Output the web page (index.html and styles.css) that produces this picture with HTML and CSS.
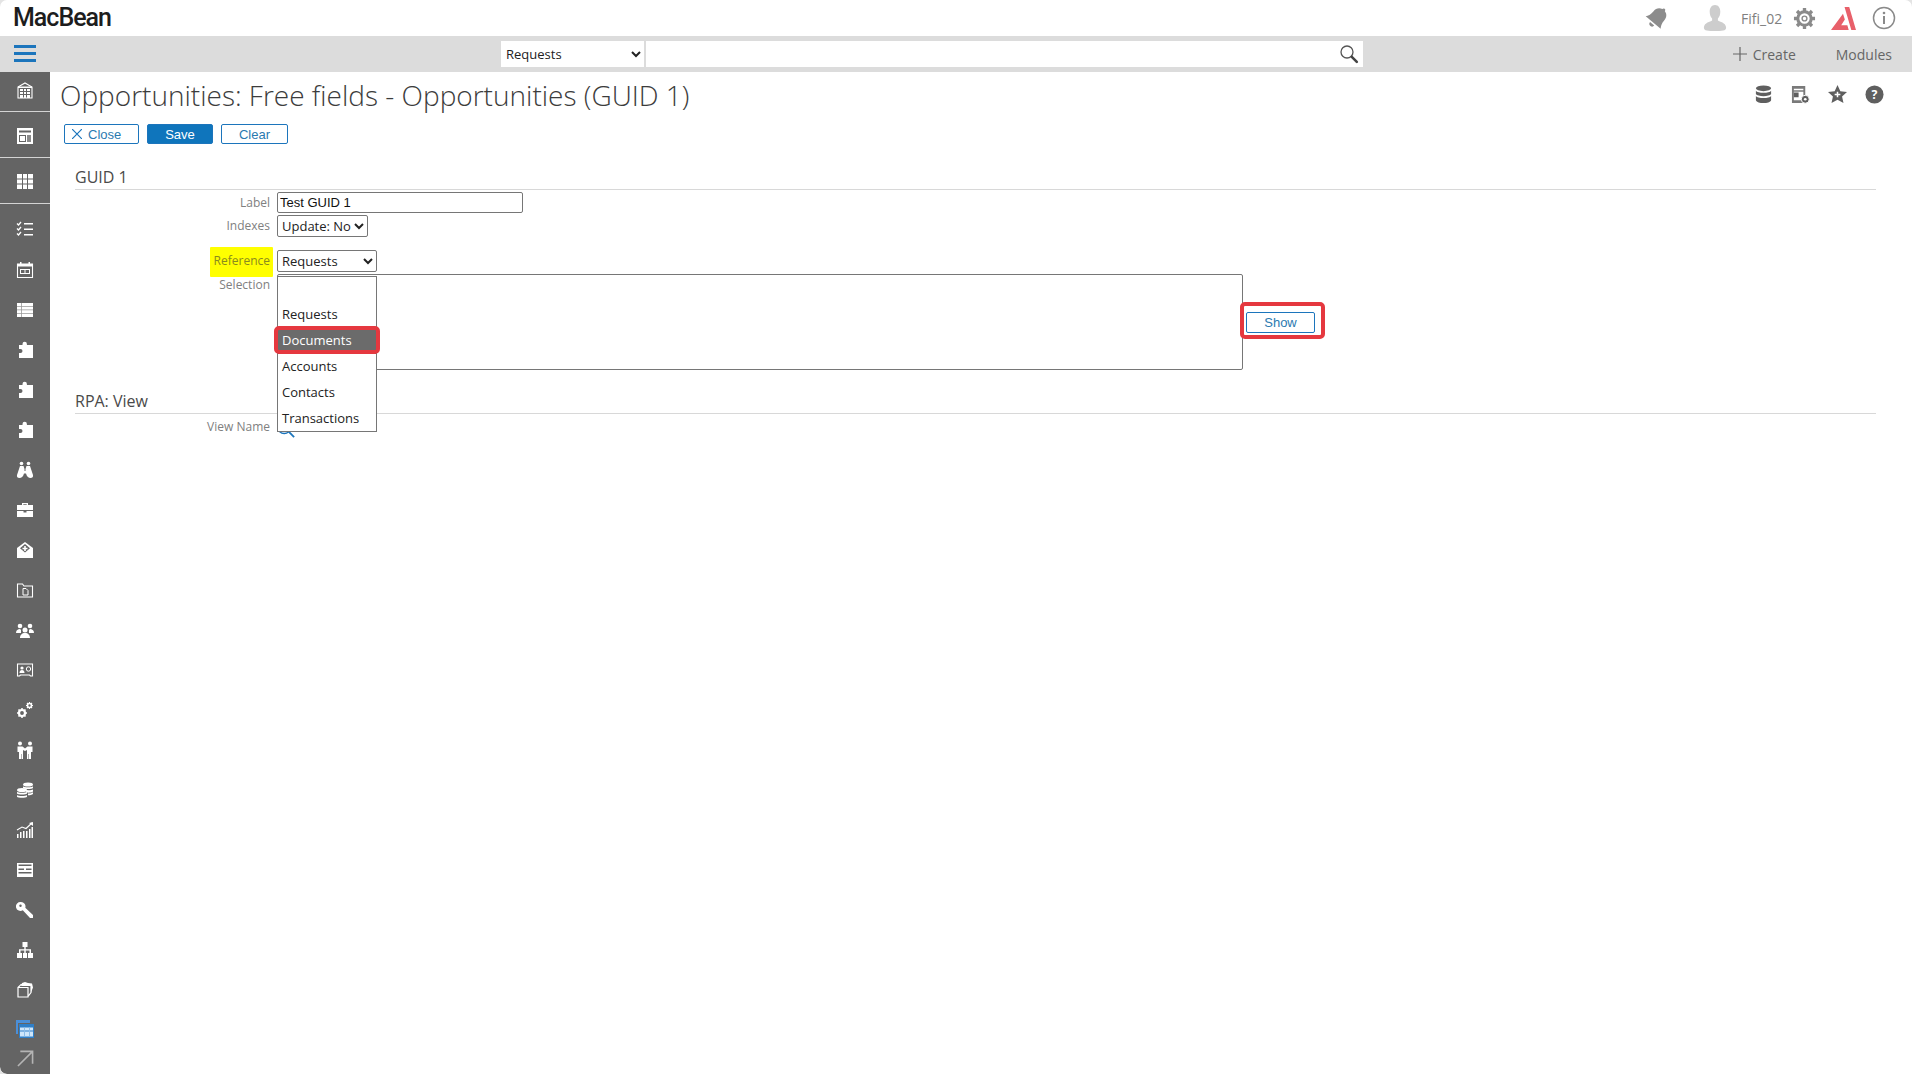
FILE: index.html
```html
<!DOCTYPE html>
<html lang="en">
<head>
<meta charset="utf-8">
<title>Opportunities: Free fields</title>
<link rel="stylesheet" href="styles.css">
</head>
<body>
<div class="app">
  <header class="topbar">
    <div class="logo">MacBean</div>
    <div class="top-icons">
      <svg class="i-bell" viewBox="0 0 24 24"><g transform="rotate(40 12 12)" fill="#8c8c8c"><path d="M10.500 2.500a1.500 1.500 0 0 1 3 0c3.500.8 5 3.500 5 7 0 4 1 6 2.500 8H3c1.500-2 2.500-4 2.500-8 0-3.500 1.500-6.200 5-7z"/><path d="M9.500 19h5a2.500 2.500 0 0 1-5 0z"/></g></svg>
      <svg class="i-user" viewBox="0 0 24 28"><path fill="#cdcdcd" d="M12 0c3.500 0 5.500 3 5.500 7 0 3-1 5.500-2.500 7v2c2 1.500 8 2 8.500 7 .2 2-1 3-3 3.500-2 .5-6 .5-8.500.5s-6.500 0-8.500-.5c-2-.5-3.200-1.500-3-3.500C1 18 7 17.500 9 16v-2c-1.500-1.500-2.500-4-2.500-7 0-4 2-7 5.500-7z"/></svg>
      <span class="username">Fifi_02</span>
      <svg class="i-gear" viewBox="0 0 24 24"><circle cx="12" cy="12" r="7" fill="none" stroke="#8a8a8a" stroke-width="3.200"/><circle cx="12" cy="12" r="2.500" fill="none" stroke="#8a8a8a" stroke-width="1.500"/><path stroke="#8a8a8a" stroke-width="3.500" d="M12 1v4M12 19v4M1 12h4M19 12h4M4.200 4.200l2.800 2.800M17 17l2.800 2.800M4.200 19.800L7 17M17 7l2.800-2.800"/></svg>
      <svg class="i-brand" viewBox="0 0 24 24"><path fill="#e8606a" d="M13 1h4.500L24 23h-4.500zM11.500 7.500l1.800 5.500-3.500 5.500h5.900l1.300 4.500H0z"/></svg>
      <svg class="i-info" viewBox="0 0 24 24"><circle cx="12" cy="12" r="10.500" fill="none" stroke="#8a8a8a" stroke-width="1.500"/><path fill="#8a8a8a" d="M11 10h2v8h-2z"/><circle cx="12" cy="7" r="1.300" fill="#8a8a8a"/></svg>
    </div>
  </header>

  <nav class="navbar">
    <svg class="hamburger" viewBox="0 0 22 17"><path fill="#1c75bc" d="M0 0h22v3H0zM0 7h22v3H0zM0 14h22v3H0z"/></svg>
    <div class="searchbox">
      <select class="search-scope"><option>Requests</option></select>
      <div class="search-input">
        <svg class="i-search" viewBox="0 0 20 20"><circle cx="8" cy="8" r="6" fill="none" stroke="#555" stroke-width="1.300"/><path stroke="#444" stroke-width="2.600" stroke-linecap="round" d="M12.800 12.800l5 5"/></svg>
      </div>
    </div>
    <div class="nav-actions">
      <span class="nav-create"><svg class="i-plus" viewBox="0 0 14 14"><path stroke="#666" stroke-width="1.200" d="M7 0v14M0 7h14"/></svg>Create</span>
      <span class="nav-modules">Modules</span>
    </div>
  </nav>

  <div class="main">
    <aside class="sidebar">
      <div class="side-item first sep"><svg viewBox="0 0 18 18"><path fill="none" stroke="#fff" stroke-width="1.100" d="M2 6l7-4 7 4v11H2z"/><path fill="#fff" d="M2 5.500h14V7H2z"/><path fill="#fff" d="M4 8h3v2H4zM8 8h2v2H8zM11 8h3v2h-3zM4 11h3v2H4zM8 11h2v2H8zM11 11h3v2h-3zM4 14h3v3H4zM8 14h2v3H8zM11 14h3v3h-3z"/></svg></div>
      <div class="side-item second sep"><svg viewBox="0 0 18 18"><path fill="#fff" d="M1 1h16v16H1z"/><path fill="#646464" d="M3 3.500h12v2H3zM3 8h7v7H3z"/><path fill="#8a8a8a" d="M11 8h4v7h-4z"/><path fill="#fff" d="M4 9h5v5H4z"/></svg></div>
      <div class="side-item third sep"><svg viewBox="0 0 18 18"><path fill="#fff" d="M1 2h16v15H1z"/><path fill="#646464" d="M1 6.500h16v1H1zM1 11.500h16v1H1zM6 2h1v15H6zM11 2h1v15h-1z"/></svg></div>
      <div class="side-item fourth"><svg viewBox="0 0 18 18"><path fill="none" stroke="#fff" stroke-width="1.300" d="M1 3.500l1.500 1.500L5 2M1 8.500L2.500 10 5 7M1 13.500L2.500 15 5 12"/><path fill="#fff" d="M8 3h9v1.500H8zM8 8.500h9V10H8zM8 14h9v1.500H8z"/></svg></div>
      <div class="side-item fifth"><svg viewBox="0 0 18 18"><path fill="none" stroke="#fff" stroke-width="1.100" d="M1.500 3h15v13.500h-15z"/><path fill="#fff" d="M1.500 3h15v2.500h-15zM4 1h1.500v3H4zM12.500 1H14v3h-1.500zM4 8h10v5H4z"/><path fill="#646464" d="M5 9h3.500v3H5zM9.500 9H13v3H9.500z"/></svg></div>
      <div class="side-item sixth"><svg viewBox="0 0 18 18"><path fill="#fff" d="M1 2h16v14H1z"/><path fill="#9a9a9a" d="M5 2h.8v14H5zM1 5h16v.8H1zM1 8.500h16v.8H1zM1 12h16v.8H1z"/></svg></div>
      <div class="side-item"><svg viewBox="0 0 18 18"><use href="#puzzle"/></svg></div>
      <div class="side-item"><svg viewBox="0 0 18 18"><use href="#puzzle"/></svg></div>
      <div class="side-item"><svg viewBox="0 0 18 18"><use href="#puzzle"/></svg></div>
      <div class="side-item"><svg viewBox="0 0 18 18"><g fill="#fff"><circle cx="5.500" cy="2.500" r="1.800"/><circle cx="12.500" cy="2.500" r="1.800"/><path d="M4 5h3.500l1 3v2h1V8l1-3H14l3 9c.4 2-.6 3-2.500 3S11 16 10 12.500H8C7 16 5.500 17 3.500 17S.6 16 1 14z"/></g></svg></div>
      <div class="side-item"><svg viewBox="0 0 18 18"><path fill="#fff" d="M6 2h6v2h5v5H1V4h5zM7.300 3.200V4h3.400v-.8zM1 10h6.500v1.500h3V10H17v6H1z"/></svg></div>
      <div class="side-item"><svg viewBox="0 0 18 18"><path fill="#fff" d="M9 1l8 6v10H1V7z"/><path fill="#646464" d="M9 3l5 4.200L9 11.500 4 7.200z"/><path fill="#fff" d="M8.200 5h1.600v1.700h1.700v1.500H9.800V10H8.200V8.200H6.500V6.700h1.700z"/></svg></div>
      <div class="side-item"><svg viewBox="0 0 18 18"><path fill="none" stroke="#fff" stroke-width="1.100" d="M1.500 3h5l1.500 2h8.500v11h-15z"/><path fill="none" stroke="#fff" stroke-width="1" d="M7 7.500h3l2 2v4.500H7z"/></svg></div>
      <div class="side-item"><svg viewBox="0 0 18 18"><g fill="#fff"><circle cx="4" cy="5" r="2.300"/><circle cx="14" cy="5" r="2.300"/><circle cx="9" cy="9" r="2.500"/><path d="M0 12c0-3 2-4 4-4l1 1v3zM18 12c0-3-2-4-4-4l-1 1v3zM4 17c0-3 2-5 5-5s5 2 5 5z"/></g></svg></div>
      <div class="side-item"><svg viewBox="0 0 18 18"><path fill="none" stroke="#fff" stroke-width="1.100" d="M1.500 3h15v12h-2l-1-1h-9l-1 1h-2z"/><g fill="#fff"><circle cx="6" cy="7" r="1.600"/><path d="M3.500 12c0-2 1-3 2.500-3s2.500 1 2.500 3z"/></g><circle cx="12.500" cy="8" r="2.200" fill="none" stroke="#fff"/></svg></div>
      <div class="side-item"><svg viewBox="0 0 18 18"><circle cx="6" cy="12" r="3" fill="none" stroke="#fff" stroke-width="2.200"/><path stroke="#fff" stroke-width="1.600" d="M6 7v2M6 15v2M1 12h2M9 12h2M2.500 8.500l1.500 1.500M8 14l1.500 1.500M2.500 15.500L4 14M8 10l1.500-1.500"/><circle cx="13.500" cy="4.500" r="2" fill="none" stroke="#fff" stroke-width="1.600"/><path stroke="#fff" stroke-width="1.200" d="M13.500 1v1M13.500 7v1M10 4.500h1M16 4.500h1M11 2l1 1M15 6l1 1M11 7l1-1M15 3l1-1"/></svg></div>
      <div class="side-item"><svg viewBox="0 0 18 18"><g fill="#fff"><circle cx="4" cy="2.500" r="2"/><circle cx="14" cy="2.500" r="2"/><path d="M1.500 5.500h5L9 7.500l2.500-2h5V11H15v7h-2v-5h-.5v5H11V9L9 10 7 9v9H5.500v-5H5v5H3v-7H1.500z"/></g></svg></div>
      <div class="side-item"><svg viewBox="0 0 18 18"><g fill="#fff"><ellipse cx="12" cy="3.500" rx="5" ry="2"/><path d="M7 5.300c1 1.400 9 1.400 10 0V7c-1 1.400-9 1.400-10 0zM8 8.500c3 1 7 1 9 0v2c-1 1-4 1.400-6 1.100zM12 12.500c2 0 4-.3 5-1.200V13c-1 1-3 1.300-5 1.300z"/><ellipse cx="6" cy="9" rx="5" ry="2"/><path d="M1 10.800c1 1.400 9 1.400 10 0v1.700c-1 1.400-9 1.400-10 0zM1 14c1 1.400 9 1.400 10 0v1.700c-1 1.400-9 1.400-10 0z"/></g></svg></div>
      <div class="side-item"><svg viewBox="0 0 18 18"><path fill="none" stroke="#fff" stroke-width="1.100" d="M1 9l5-3 4 1.500L16 2"/><path fill="#fff" d="M17 1v4l-4-3zM1 13h1.500v4H1zM4 11h1.500v6H4zM7 10h1.500v7H7zM10 10h1.500v7H10zM13 8h1.500v9H13zM15.500 6H17v11h-1.500z"/></svg></div>
      <div class="side-item"><svg viewBox="0 0 18 18"><path fill="#fff" d="M1 2h16v14H1z"/><path fill="#646464" d="M2.500 3.500h13V5h-13zM2.500 7.500H8V9H2.500zM10 7.500h5.500V9H10zM2.500 11h13v1.500h-13z"/></svg></div>
      <div class="side-item"><svg viewBox="0 0 18 18"><path fill="#fff" d="M5 1a4.500 4.500 0 0 1 4.300 5.800L17 14v3h-3L6.800 9.300A4.500 4.500 0 1 1 5 1z"/><circle cx="4.500" cy="4.800" r="1.200" fill="#646464"/></svg></div>
      <div class="side-item"><svg viewBox="0 0 18 18"><path fill="#fff" d="M6.500 1h5v5h-1.800v2.200H15V12h2v5h-5v-5h1.500V9.500h-3.800V12H11v5H7v-5h1.300V9.500H4.500V12H6v5H1v-5h2V8.200h5.300V6H6.500z"/></svg></div>
      <div class="side-item"><svg viewBox="0 0 18 18"><path fill="none" stroke="#fff" stroke-width="1.200" d="M2 6.500h10v9.500H2zM2 6.500l3-3h10v8l-3 4"/><path fill="#fff" d="M6 2l3-1 3 1 4 .5 1 4-2 5V5H5z"/></svg></div>
      <div class="side-item blue"><svg viewBox="0 0 18 18"><path fill="#4a8fd8" d="M0 0h14v3H0zM0 3h2v11H0z"/><path fill="#2f7fc8" d="M3 4h15v14H3z"/><path fill="#cfe6fa" d="M4 7.500h13v3H4zM4 11.500h13v5H4z"/><path fill="#8dbde8" d="M8 7.500h1v9H8zM13 7.500h1v9h-1z"/></svg></div>
      <div class="side-item last"><svg class="arrow" viewBox="0 0 18 18"><path fill="none" stroke="#b4b4b4" stroke-width="1.700" d="M1 17L16.500 1.500M3.500 1.500h13v13"/></svg></div>
    </aside>

    <main class="content">
      <div class="title-row">
        <h1 class="page-title">Opportunities: Free fields - Opportunities (GUID 1)</h1>
        <div class="page-icons">
          <svg viewBox="0 0 18 20"><g fill="#5f5f5f"><ellipse cx="9" cy="3.500" rx="8" ry="3"/><path d="M1 6c1.500 3 14.500 3 16 0v3.500c-1.500 3-14.500 3-16 0zM1 11.500c1.500 3 14.500 3 16 0V16c-1.500 4-14.500 4-16 0z"/></g></svg>
          <svg viewBox="0 0 20 20"><path fill="#7a7a7a" d="M1 1h14v18H1z"/><path fill="#fff" d="M3 4h10v1.500H3zM3 7h10v9H3z"/><path fill="#5f5f5f" d="M3 8h5v5H3z"/><circle cx="15" cy="15" r="4.200" fill="#5f5f5f" stroke="#fff"/><circle cx="15" cy="15" r="1.400" fill="#fff"/></svg>
          <svg viewBox="0 0 20 20"><path fill="#5f5f5f" d="M10 0l3 6.500 7 .8-5.200 4.700 1.500 7L10 15.500 3.700 19l1.500-7L0 7.300l7-.8z"/><path fill="#fff" d="M9.200 7h1.600v2.200H13v1.600h-2.200V13H9.200v-2.200H7V9.200h2.200z"/></svg>
          <svg viewBox="0 0 20 20"><circle cx="10" cy="10" r="9.500" fill="#5f5f5f"/><text class="help-mark" x="10" y="14.500" text-anchor="middle">?</text></svg>
        </div>
      </div>

      <div class="actions">
        <button class="btn btn-close"><svg class="i-x" viewBox="0 0 10 10"><path stroke="#1c75bc" stroke-width="1.200" d="M0 0l10 10M10 0L0 10"/></svg>Close</button>
        <button class="btn btn-save">Save</button>
        <button class="btn btn-clear">Clear</button>
      </div>

      <section class="form-area">
        <h2 class="section-head">GUID 1</h2>
        <div class="form-row row-label">
          <label class="field-label">Label</label>
          <input class="text-input" type="text" value="Test GUID 1">
        </div>
        <div class="form-row row-indexes">
          <label class="field-label">Indexes</label>
          <select class="sel sel-indexes"><option>Update: No</option></select>
        </div>
        <div class="form-row row-reference">
          <label class="field-label ref-label">Reference</label>
          <select class="sel sel-reference"><option>Requests</option></select>
        </div>
        <div class="form-row row-selection">
          <label class="field-label sel-label">Selection</label>
          <div class="selection-box"></div>
          <button class="btn btn-show">Show</button>
          <span class="show-mark"></span>
        </div>
        <h2 class="section-head head-rpa">RPA: View</h2>
        <div class="form-row row-view">
          <label class="field-label">View Name</label>
          <svg class="i-lookup" viewBox="0 0 20 20"><circle cx="8" cy="8" r="7" fill="none" stroke="#1c75bc" stroke-width="1.500"/><path stroke="#1c75bc" stroke-width="2" d="M13 13l6 6"/></svg>
        </div>

        <ul class="dropdown">
          <li class="opt"></li>
          <li class="opt">Requests</li>
          <li class="opt active">Documents</li>
          <li class="opt">Accounts</li>
          <li class="opt">Contacts</li>
          <li class="opt">Transactions</li>
        </ul>
        <span class="opt-mark"></span>
      </section>
    </main>
  </div>
</div>
<svg class="defs" width="0" height="0"><defs><path id="puzzle" fill="#fff" d="M6.500 4V3a2.200 2.200 0 1 1 4.400 0v1H17v13H3v-5h1.500a2 2 0 1 0 0-4H3V4z"/></defs></svg>
</body>
</html>
```

FILE: styles.css
```css
* { box-sizing: border-box; }
html, body { margin: 0; padding: 0; background: #e4e4e4; }
body { font-family: "Open Sans", sans-serif; color: #333; overflow: hidden; }
.defs { position: absolute; }

.app {
  width: 1912px; height: 1074px; display: flex; flex-direction: column;
  background: #fff; overflow: hidden;
  border-radius: 7px 7px 0 7px;
}

.topbar { height: 36px; flex: none; display: flex; align-items: center; justify-content: space-between; }
.logo {
  font-family: Roboto, sans-serif; font-weight: 500; font-size: 25px; line-height: 36px;
  color: #1d1d1d; padding-left: 13px; letter-spacing: -1px;
}
.top-icons { display: flex; align-items: center; padding-right: 16px; }
.top-icons svg { display: block; }
.i-bell { width: 26px; height: 26px; }
.i-user { width: 24px; height: 27px; margin-left: 33px; }
.username { font-size: 14px; color: #808080; margin-left: 14px; width: 43px; white-space: nowrap; }
.i-gear { width: 23px; height: 23px; margin-left: 9px; }
.i-brand { width: 25px; height: 25px; margin-left: 15px; }
.i-info { width: 24px; height: 24px; margin-left: 16px; }

.navbar { height: 36px; flex: none; background: #dcdcdc; display: flex; align-items: center; position: relative; padding-left: 14px; }
.hamburger { width: 22px; height: 17px; display: block; margin-top: -2px; }
.searchbox { display: flex; height: 26px; margin-left: 465px; gap: 2px; }
.search-scope {
  width: 143px; height: 26px; border: 0; background: #fff; border-radius: 0;
  font: 13px "Open Sans", sans-serif; color: #222; padding: 0 0 0 1px;
}
.search-input { width: 717px; height: 26px; background: #fff; display: flex; align-items: center; justify-content: flex-end; padding-right: 4px; }
.i-search { width: 20px; height: 20px; display: block; }
.nav-actions { display: flex; align-items: center; margin-left: auto; padding-right: 20px; font-size: 14px; color: #666; }
.nav-create { display: flex; align-items: center; gap: 6px; }
.i-plus { width: 14px; height: 14px; display: block; }
.nav-modules { margin-left: 40px; }

.main { flex: 1; display: flex; min-height: 0; }
.sidebar { width: 50px; flex: none; background: #646464; display: flex; flex-direction: column; border-bottom-left-radius: 7px; overflow: hidden; }
.side-item { height: 40px; flex: none; display: flex; align-items: center; justify-content: center; }
.side-item svg { width: 18px; height: 18px; display: block; }
.side-item svg.arrow { width: 17px; height: 17px; }
.sep { border-bottom: 1px solid #d4d4d4; }
.first { height: 40px; padding-bottom: 4px; }
.second { height: 46px; padding-top: 2px; }
.third { height: 46px; }
.fourth { height: 50px; }
.fifth { height: 32px; }
.sixth { height: 44px; padding-top: 4px; }
.blue { height: 32px; padding-top: 6px; }
.last { height: 32px; }

.content { flex: 1; padding-left: 10px; min-width: 0; }
.title-row { display: flex; justify-content: space-between; align-items: center; height: 40px; margin-top: 3px; }
.page-title { margin: 0; font-size: 28px; font-weight: 300; color: #3c3c3c; line-height: 40px; white-space: nowrap; }
.page-icons { display: flex; align-items: center; gap: 18px; padding-right: 28px; margin-top: -2px; }
.page-icons svg { width: 19px; height: 19px; display: block; }
.help-mark { font: 700 13px "Open Sans", sans-serif; fill: #fff; }

.actions { display: flex; gap: 8px; margin-top: 9px; padding-left: 4px; }
.btn {
  height: 20px; border: 1px solid #1c75bc; border-radius: 2px; background: #fff; color: #2a7ab0;
  font: 13px "Liberation Sans", sans-serif; padding: 0; display: flex; align-items: center; justify-content: center;
}
.btn-close { width: 75px; gap: 6px; justify-content: flex-start; padding-left: 7px; }
.i-x { width: 10px; height: 10px; display: block; }
.btn-save { width: 66px; background: #0f75bc; color: #fff; font-weight: 400; }
.btn-clear { width: 67px; }

.form-area { position: relative; margin: 22px 36px 0 15px; }
.section-head { margin: 0; font-size: 16px; font-weight: 400; color: #4a4a4a; line-height: 22px; height: 24px; border-bottom: 1px solid #d8d8d8; }
.form-row { display: flex; align-items: center; }
.field-label { width: 195px; flex: none; text-align: right; font-size: 12px; color: #808080; margin-right: 7px; }
.row-label { height: 22px; margin-top: 1px; }
.text-input { width: 246px; height: 21px; border: 1px solid #767676; border-radius: 2px; font: 13px "Liberation Sans", sans-serif; color: #111; padding: 0 2px; background: #fff; }
.row-indexes { height: 23px; margin-top: 1px; }
.sel { height: 22px; border: 1px solid #767676; border-radius: 2px; font: 13px "Open Sans", sans-serif; color: #222; background: #fff; padding: 0; }
.sel-indexes { width: 91px; }
.row-reference { height: 30px; margin-top: 10px; }
.ref-label { width: 63px; height: 30px; line-height: 28px; margin-left: 135px; margin-right: 4px; background: #ffff00; color: #8a8a1e; padding-right: 3px; border-radius: 1px; }
.sel-reference { width: 100px; margin-top: -2px; }
.row-selection { position: relative; height: 96px; margin-top: -3px; align-items: flex-start; }
.sel-label { margin-top: 0; line-height: 18px; padding-top: 2px; }
.selection-box { width: 966px; height: 96px; border: 1px solid #767676; border-radius: 2px; flex: none; }
.btn-show { width: 69px; height: 21px; margin: 38px 0 0 3px; }
.show-mark { position: absolute; left: 1165px; top: 28px; width: 85px; height: 37px; border: 4px solid #e5383f; border-radius: 5px; }
.head-rpa { margin-top: 20px; }
.row-view { height: 24px; position: relative; }
.i-lookup { width: 18px; height: 18px; margin-top: 6px; display: block; }

.dropdown {
  position: absolute; left: 202px; top: 110px; width: 100px; height: 156px; margin: 0; padding: 0;
  list-style: none; background: #fff; border: 1px solid #767676; font-size: 13px; color: #222;
}
.opt { height: 26px; line-height: 24px; padding-left: 4px; }
.dropdown .opt:first-child { height: 25px; }
.active { background: #6b6b6b; color: #fff; }
.opt-mark { position: absolute; left: 199px; top: 160px; width: 106px; height: 28px; border: 4px solid #e5383f; border-radius: 5px; }
```
